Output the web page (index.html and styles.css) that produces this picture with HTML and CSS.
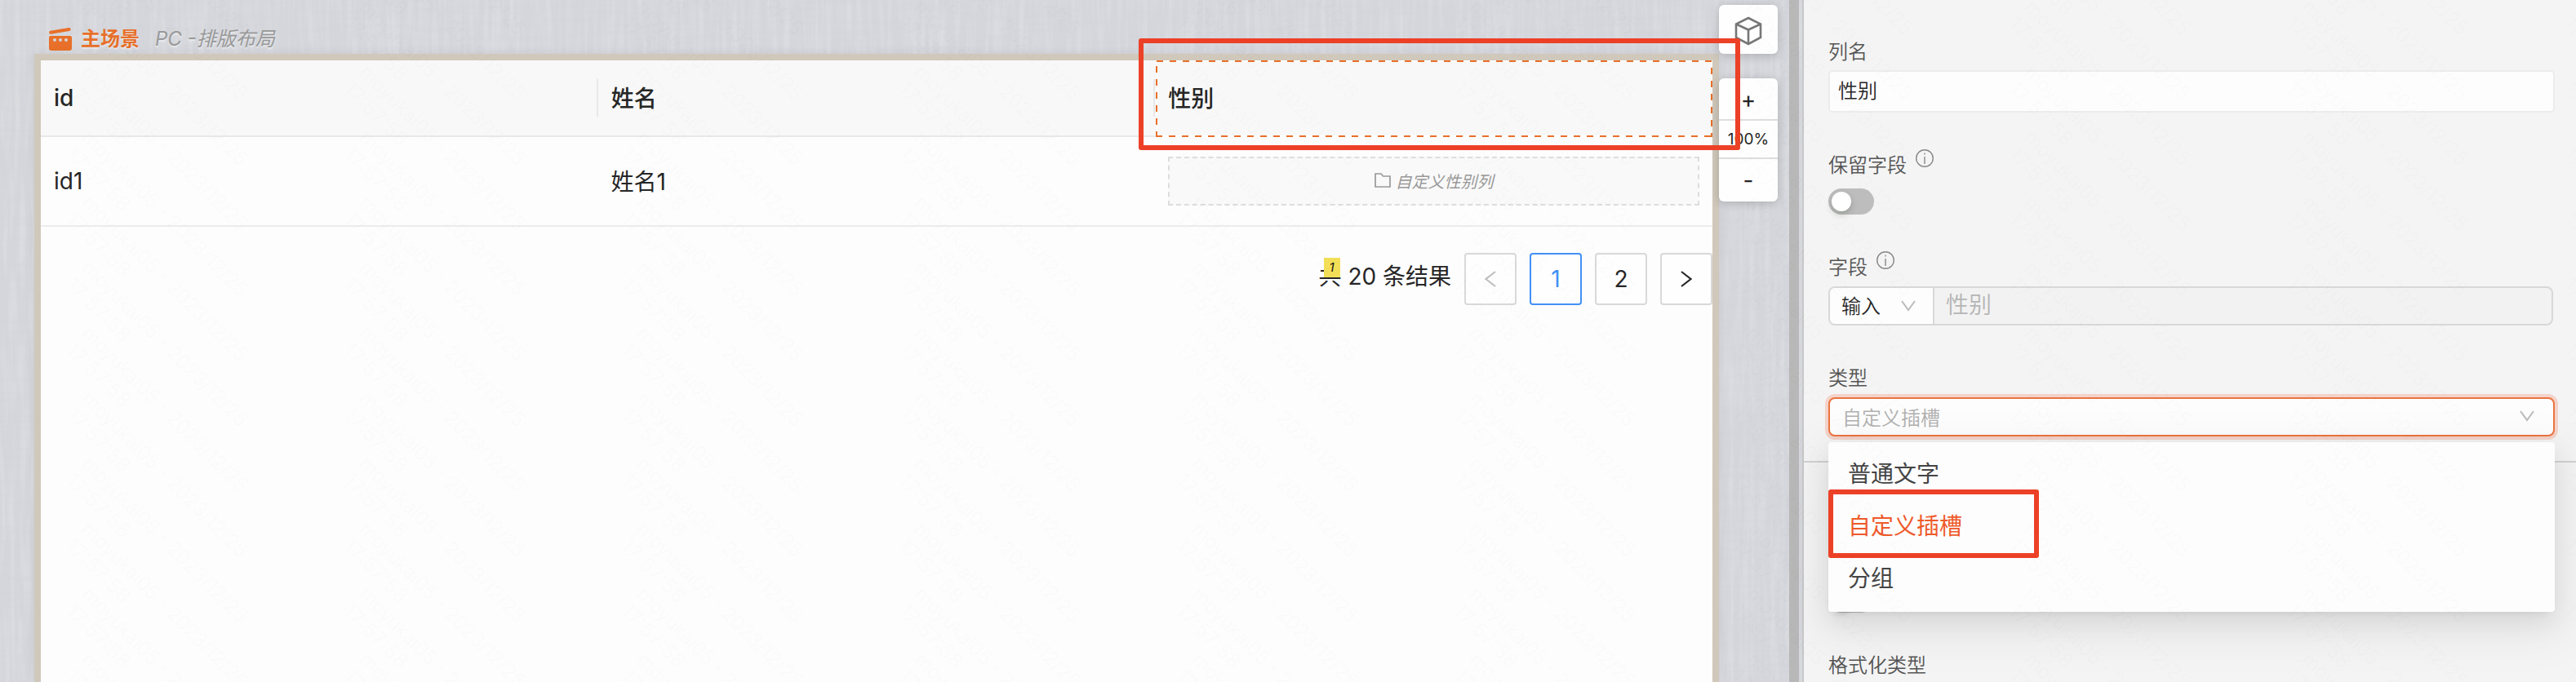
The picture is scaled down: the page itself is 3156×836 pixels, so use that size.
FILE: index.html
```html
<!DOCTYPE html>
<html lang="zh-CN">
<head>
<meta charset="utf-8">
<title>主场景</title>
<link rel="stylesheet" href="styles.css">
</head>
<body>
<div class="app">
  <main class="stage">
    <svg class="linen" aria-hidden="true">
      <filter id="warp" x="0" y="0" width="100%" height="100%"><feTurbulence type="fractalNoise" baseFrequency="0.16 0.012" numOctaves="2" seed="4"/><feColorMatrix values="0 0 0 0 1  0 0 0 0 1  0 0 0 0 1  1 0 0 0 -0.4"/></filter>
      <filter id="weft" x="0" y="0" width="100%" height="100%"><feTurbulence type="fractalNoise" baseFrequency="0.012 0.16" numOctaves="2" seed="9"/><feColorMatrix values="0 0 0 0 0.6  0 0 0 0 0.61  0 0 0 0 0.64  0.8 0 0 0 -0.34"/></filter>
      <rect width="100%" height="100%" filter="url(#warp)"/>
      <rect width="100%" height="100%" filter="url(#weft)"/>
    </svg>
    <section class="scene">
      <header class="scene-head">
        <svg class="clapper" viewBox="0 0 28 28"><path d="M2.2 5.8 24.6 2" stroke="#e8702a" stroke-width="4" stroke-linecap="round"/><path fill="#e8702a" fill-rule="evenodd" d="M2 10h24a2 2 0 0 1 2 2v13a3 3 0 0 1-3 3H3a3 3 0 0 1-3-3V12a2 2 0 0 1 2-2zM7 13a2 2 0 1 0 0 4 2 2 0 0 0 0-4zm7 0a2 2 0 1 0 0 4 2 2 0 0 0 0-4zm7 0a2 2 0 1 0 0 4 2 2 0 0 0 0-4z"/></svg>
        <b class="scene-name">主场景</b>
        <i class="scene-kind">PC -排版布局</i>
      </header>
      <div class="page">
        <div class="row row-head">
          <div class="cell">id</div>
          <div class="cell cell-split cell-cjk">姓名</div>
          <div class="cell cell-split cell-cjk">性别
            <svg class="focus" viewBox="0 0 682 94"><rect x="1" y="1" width="680" height="92" stroke="#fff"/><path d="M1 1H681M0 93H681" stroke="#e8702a"/><path d="M1 7V94M681 9V94" stroke="#e8702a"/></svg>
          </div>
        </div>
        <div class="row row-body">
          <div class="cell">id1</div>
          <div class="cell cell-cjk">姓名1</div>
          <div class="cell">
            <div class="slot">
              <svg class="folder" viewBox="0 0 20 18"><path d="M1 1h7l2.5 3H19v13H1z" fill="none" stroke="#999" stroke-width="1.7"/></svg>
              <i>自定义性别列</i>
            </div>
          </div>
        </div>
        <nav class="pager">
          <span class="total">共 20 条结果<i class="note">1</i></span>
          <span class="pg pg-off"><svg viewBox="0 0 14 20"><path d="M13 1 1.5 10 13 19"/></svg></span>
          <span class="pg pg-on">1</span>
          <span class="pg">2</span>
          <span class="pg"><svg viewBox="0 0 14 20"><path d="M1 1l11.5 9L1 19"/></svg></span>
        </nav>
      </div>
    </section>
    <aside class="tools">
      <div class="tool-cube"><svg viewBox="0 0 34 36"><path d="M17 2 32 9.500V26L17 34 2 26V9.500zM2 9.500l15 7 15-7M17 16.500V34" fill="none" stroke="#777" stroke-width="2.600"/></svg></div>
      <div class="zoom">
        <span class="zoom-sign">+</span>
        <span class="zoom-value">100%</span>
        <span class="zoom-sign">-</span>
      </div>
    </aside>
  </main>
  <div class="divider"></div>
  <aside class="panel">
    <div class="label">列名</div>
    <div class="input">性别</div>
    <div class="label label-keep">保留字段 <svg class="info" viewBox="0 0 22 22"><circle cx="11" cy="11" r="10.300"/><path d="M11 9v9M11 4.500v2"/></svg></div>
    <div class="switch"><span class="knob"></span></div>
    <div class="label label-field">字段 <svg class="info" viewBox="0 0 22 22"><circle cx="11" cy="11" r="10.300"/><path d="M11 9v9M11 4.500v2"/></svg></div>
    <div class="group">
      <div class="group-kind">输入<svg class="chev" viewBox="0 0 18 14"><path d="M1 1l8 11 8-11"/></svg></div>
      <div class="group-value">性别</div>
    </div>
    <div class="label label-type">类型</div>
    <div class="select">自定义插槽<svg class="chev" viewBox="0 0 18 14"><path d="M1 1l8 11 8-11"/></svg></div>
    <div class="rule"></div>
    <div class="switch switch-next"><span class="knob"></span></div>
    <div class="label label-format">格式化类型</div>
    <ul class="menu">
      <li>普通文字</li>
      <li class="picked">自定义插槽</li>
      <li>分组</li>
    </ul>
  </aside>
  <svg class="watermark" aria-hidden="true">
    <defs>
      <g id="mark" transform="rotate(45)"><text textLength="275">moyukai05 - 2023/12/25</text><text y="28" x="1" textLength="99">17:57:58</text></g>
      <pattern id="marks" width="340" height="80" patternUnits="userSpaceOnUse">
        <use href="#mark" transform="translate(99 -230)"/>
        <use href="#mark" transform="translate(99 -150)"/>
        <use href="#mark" transform="translate(99 -70)"/>
        <use href="#mark" transform="translate(99 10)"/>
      </pattern>
    </defs>
    <rect width="100%" height="100%" fill="url(#marks)"/>
  </svg>
  <div class="callout callout-column"></div>
  <div class="callout callout-option"></div>
</div>
</body>
</html>
```
FILE: styles.css
```css
* { box-sizing: border-box; }
body { margin: 0; font-family: Inter, "Noto Sans CJK SC", sans-serif; font-size: 28px; color: #262626; }
.app { position: relative; display: flex; width: 3156px; height: 836px; overflow: hidden; background: #d4d6db; }

.stage { position: relative; display: flex; width: 2192px; padding-left: 42px; }
.linen { position: absolute; left: 0; top: 0; width: 2208px; height: 836px; opacity: .4; }
.scene { position: relative; width: 2064px; display: flex; flex-direction: column; }
.scene-head { display: flex; align-items: center; height: 66px; padding: 30px 0 0 18px; font-size: 24px; line-height: 36px; text-shadow: 0 2px 2px #fff8; }
.clapper { width: 28px; height: 28px; margin-right: 11px; flex: none; fill: none; }
.scene-name { color: #e8702a; margin-right: 19px; }
.scene-kind { color: #999; }
.page { flex: 1; border: 8px solid #d0c8bb; border-bottom: 0; background: #fdfdfd; box-shadow: 0 0 12px #0001; }

.row { display: grid; grid-template-columns: repeat(3, 1fr); border-bottom: 2px solid #e8e8e8; }
.row-head { height: 94px; background: #f8f8f8; font-weight: 500; }
.row-body { height: 110px; border-color: #ececec; }
.cell { position: relative; display: flex; align-items: center; padding: 0 16px; }
.cell-cjk { padding-bottom: 3px; }
.cell-split::before { content: ""; position: absolute; left: -2px; top: 23px; width: 2px; height: 46px; background: #e8e8e8; }
.focus { position: absolute; right: 0; top: 0; width: 682px; height: 94px; fill: none; stroke-width: 2; }
.focus path { stroke-dasharray: 8 8; }
.slot { display: flex; align-items: center; justify-content: center; gap: 6px; width: 651px; height: 60px; padding-bottom: 2px; border: 2px dashed #ddd; background: #f9f9f9; color: #999; font-size: 20px; }
.folder { width: 20px; height: 18px; }

.pager { display: flex; justify-content: flex-end; gap: 16px; padding-top: 32px; line-height: 59px; }
.total { position: relative; }
.note { position: absolute; left: 6px; top: 6px; width: 20px; height: 24px; background: #f3df57; color: #111; font-size: 15px; line-height: 24px; text-align: center; }
.pg { display: flex; align-items: center; justify-content: center; width: 64px; height: 64px; border: 2px solid #d9d9d9; border-radius: 4px; background: #fefefe; }
.pg svg { width: 14px; height: 20px; fill: none; stroke: #262626; stroke-width: 2.2; }
.pg-off svg { stroke: #bfbfbf; }
.pg-on { color: #4390f7; border-color: #4390f7; }

.tools { position: relative; width: 72px; padding-top: 6px; }
.tool-cube, .zoom { border-radius: 6px; background: #fefefe; box-shadow: 0 2px 12px #0003; }
.tool-cube { height: 60px; display: flex; align-items: center; justify-content: center; padding-top: 4px; }
.tool-cube svg { width: 34px; height: 36px; }
.zoom { margin-top: 30px; height: 151px; display: grid; grid-template-rows: 50px 49px 52px; text-align: center; }
.zoom-sign { line-height: 52px; font-size: 28px; }
.zoom-value { border: solid #ddd; border-width: 2px 0; font-size: 19px; line-height: 46px; }
.divider { position: relative; width: 12px; background: #b8b8b8; margin-right: 4px; }

.panel { position: relative; flex: 1; border-left: 2px solid #c8c8ca; background: #f4f4f4; padding: 45px 26px 0 30px; font-size: 24px; font-weight: 350; }
.label { display: flex; align-items: center; height: 36px; padding-bottom: 4px; color: #555; }
.info { width: 22px; height: 22px; margin: -12px 0 0 11px; fill: none; stroke: #888; stroke-width: 1.4; }
.input { height: 52px; margin-top: 5px; border: 2px solid #ececec; border-radius: 5px; background: #fdfdfd; padding-left: 10px; line-height: 47px; }
.label-keep { margin-top: 46px; }
.switch { width: 56px; height: 32px; margin-top: 11px; padding: 4px; border-radius: 16px; background: #bdbdbd; }
.knob { display: block; width: 24px; height: 24px; border-radius: 50%; background: #fff; box-shadow: 0 4px 8px #00230b33; }
.label-field { margin-top: 46px; }
.group { display: flex; width: 888px; height: 48px; margin-top: 6px; border: 2px solid #d8d8d8; border-radius: 8px; background: #f2f2f2; line-height: 43px; overflow: hidden; }
.group-kind { display: flex; align-items: center; gap: 25px; width: 128px; padding-left: 14px; border-right: 2px solid #d8d8d8; background: #fdfdfd; }
.group-value { padding-left: 14px; font-size: 28px; color: #b5b5b5; }
.chev { width: 18px; height: 14px; fill: none; stroke: #bbb; stroke-width: 2; }
.label-type { margin-top: 46px; }
.select { display: flex; align-items: center; justify-content: space-between; height: 48px; margin-top: 6px; padding: 0 23px 2px 15px; border: 2px solid #ec7440; border-radius: 8px; background: #fdfdfd; box-shadow: 0 0 0 4px #f3d3ca; color: #b0b0b0; }
.rule { height: 2px; margin: 30px -26px 0 -30px; background: #d2d2d2; }
.switch-next { margin-top: 152px; }
.label-format { margin-top: 46px; }
.menu { position: absolute; left: 30px; top: 542px; width: 890px; height: 208px; margin: 0; padding: 8px 24px; list-style: none; border-radius: 4px; background: #fdfdfd; color: #444; font-size: 28px; line-height: 62px; font-weight: 400; box-shadow: 0 6px 12px -8px #0000001f, 0 12px 32px #00000014, 0 18px 56px 16px #0000000d; }
.menu li { height: 64px; }
.picked { color: #ee5a2a; }

.watermark { position: absolute; inset: 0; width: 3156px; height: 836px; opacity: .013; font-size: 24px; font-weight: 300; }
.callout { position: absolute; border: 6px solid #ec4127; border-radius: 3px; }
.callout-column { left: 1395px; top: 47px; width: 737px; height: 137px; }
.callout-option { left: 2240px; top: 600px; width: 258px; height: 84px; }
```
